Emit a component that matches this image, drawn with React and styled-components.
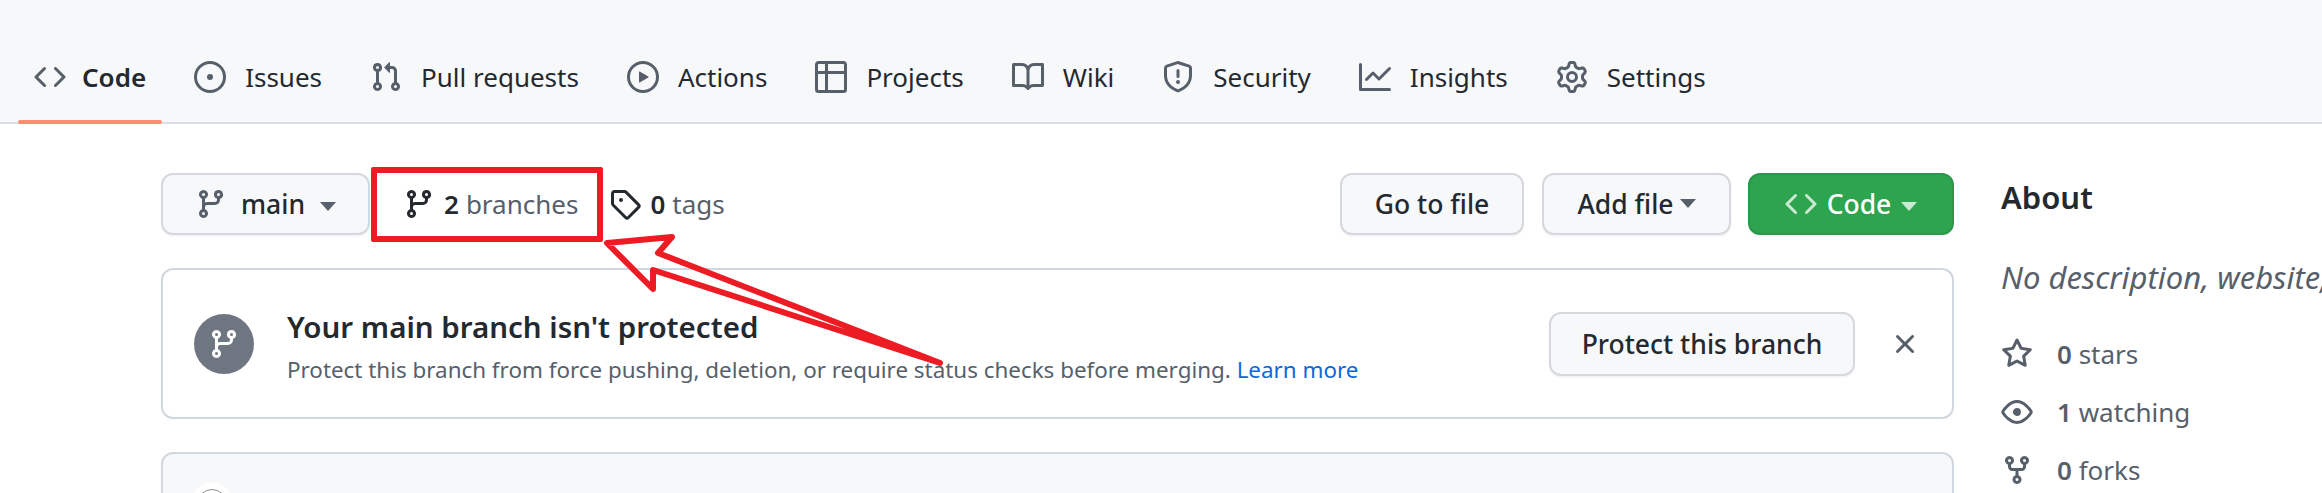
import React from "react";
import { styled, createGlobalStyle } from "styled-components";

const GlobalStyle = createGlobalStyle`
  html, body {
    margin: 0;
    padding: 0;
    background: #fff;
  }
  body {
    font-family: "Noto Sans", "Open Sans", "Liberation Sans", sans-serif;
    color: #24292f;
  }
`;

// octicons, 16px grid
const paths = {
  code: "m11.28 3.22 4.25 4.25a.75.75 0 0 1 0 1.06l-4.25 4.25a.749.749 0 0 1-1.275-.326.749.749 0 0 1 .215-.734L13.94 8l-3.72-3.72a.749.749 0 0 1 .326-1.275.749.749 0 0 1 .734.215Zm-6.56 0a.751.751 0 0 1 1.042.018.751.751 0 0 1 .018 1.042L2.06 8l3.72 3.72a.749.749 0 0 1-.326 1.275.749.749 0 0 1-.734-.215L.47 8.53a.75.75 0 0 1 0-1.06Z",
  issue: "M8 9.5a1.5 1.5 0 1 0 0-3 1.5 1.5 0 0 0 0 3ZM8 0a8 8 0 1 1 0 16A8 8 0 0 1 8 0ZM1.5 8a6.5 6.5 0 1 0 13 0 6.5 6.5 0 0 0-13 0Z",
  pull: "M1.5 3.25a2.25 2.25 0 1 1 3 2.122v5.256a2.251 2.251 0 1 1-1.5 0V5.372A2.25 2.25 0 0 1 1.5 3.25Zm5.677-.177L9.573.677A.25.25 0 0 1 10 .854V2.5h1A2.5 2.5 0 0 1 13.5 5v5.628a2.251 2.251 0 1 1-1.5 0V5a1 1 0 0 0-1-1h-1v1.646a.25.25 0 0 1-.427.177L7.177 3.427a.25.25 0 0 1 0-.354ZM3.75 2.5a.75.75 0 1 0 0 1.5.75.75 0 0 0 0-1.5Zm0 9.5a.75.75 0 1 0 0 1.5.75.75 0 0 0 0-1.5Zm8.25.75a.75.75 0 1 0 1.5 0 .75.75 0 0 0-1.5 0Z",
  play: "M8 0a8 8 0 1 1 0 16A8 8 0 0 1 8 0ZM1.5 8a6.5 6.5 0 1 0 13 0 6.5 6.5 0 0 0-13 0Zm4.879-2.773 4.264 2.559a.25.25 0 0 1 0 .428l-4.264 2.559A.25.25 0 0 1 6 10.559V5.442a.25.25 0 0 1 .379-.215Z",
  table: "M0 1.75C0 .784.784 0 1.75 0h12.5C15.216 0 16 .784 16 1.75v12.5A1.75 1.75 0 0 1 14.25 16H1.75A1.75 1.75 0 0 1 0 14.25ZM6.5 6.5v8h7.75a.25.25 0 0 0 .25-.25V6.5Zm8-1.5V1.75a.25.25 0 0 0-.25-.25H6.5V5Zm-13 1.5v7.75c0 .138.112.25.25.25H5v-8ZM5 5V1.5H1.75a.25.25 0 0 0-.25.25V5Z",
  book: "M0 1.75A.75.75 0 0 1 .75 1h4.253c1.227 0 2.317.59 3 1.501A3.743 3.743 0 0 1 11.006 1h4.245a.75.75 0 0 1 .75.75v10.5a.75.75 0 0 1-.75.75h-4.507a2.25 2.25 0 0 0-1.591.659l-.622.621a.75.75 0 0 1-1.06 0l-.622-.621A2.25 2.25 0 0 0 5.258 13H.75a.75.75 0 0 1-.75-.75Zm7.251 10.324.004-5.073-.002-2.253A2.25 2.25 0 0 0 5.003 2.5H1.5v9h3.757a3.75 3.75 0 0 1 1.994.574ZM8.755 4.75l-.004 7.322a3.752 3.752 0 0 1 1.992-.572H14.5v-9h-3.495a2.25 2.25 0 0 0-2.25 2.25Z",
  shield: "M7.467.133a1.748 1.748 0 0 1 1.066 0l5.25 1.68A1.75 1.75 0 0 1 15 3.48V7c0 1.566-.32 3.182-1.303 4.682-.983 1.498-2.585 2.813-5.032 3.855a1.697 1.697 0 0 1-1.33 0c-2.447-1.042-4.049-2.357-5.032-3.855C1.32 10.182 1 8.566 1 7V3.48a1.75 1.75 0 0 1 1.217-1.667Zm.61 1.429a.25.25 0 0 0-.153 0l-5.25 1.68a.25.25 0 0 0-.174.238V7c0 1.358.275 2.666 1.057 3.86.784 1.194 2.121 2.34 4.366 3.297a.196.196 0 0 0 .154 0c2.245-.956 3.582-2.104 4.366-3.298C13.225 9.666 13.5 8.36 13.5 7V3.48a.251.251 0 0 0-.174-.237l-5.25-1.68ZM8.75 4.75v3a.75.75 0 0 1-1.5 0v-3a.75.75 0 0 1 1.5 0ZM9 10.5a1 1 0 1 1-2 0 1 1 0 0 1 2 0Z",
  graph: "M1.5 1.75V13.5h13.75a.75.75 0 0 1 0 1.5H.75a.75.75 0 0 1-.75-.75V1.75a.75.75 0 0 1 1.5 0Zm14.28 2.53-5.25 5.25a.75.75 0 0 1-1.06 0L7 7.06 4.28 9.78a.751.751 0 0 1-1.042-.018.751.751 0 0 1-.018-1.042l3.25-3.25a.75.75 0 0 1 1.06 0L10 7.94l4.72-4.72a.751.751 0 0 1 1.042.018.751.751 0 0 1 .018 1.042Z",
  gear: "M8 0a8.2 8.2 0 0 1 .701.031C9.444.095 9.99.645 10.16 1.29l.288 1.107c.018.066.079.158.212.224.231.114.454.243.668.386.123.082.233.09.299.071l1.103-.303c.644-.176 1.392.021 1.82.63.27.385.506.792.704 1.218.315.675.111 1.422-.364 1.891l-.814.806c-.049.048-.098.147-.088.294.016.257.016.515 0 .772-.01.147.038.246.088.294l.814.806c.475.469.679 1.216.364 1.891a7.977 7.977 0 0 1-.704 1.217c-.428.61-1.176.807-1.82.63l-1.102-.302c-.067-.019-.177-.011-.3.071a5.909 5.909 0 0 1-.668.386c-.133.066-.194.158-.211.224l-.29 1.106c-.168.646-.715 1.196-1.458 1.26a8.006 8.006 0 0 1-1.402 0c-.743-.064-1.289-.614-1.458-1.26l-.289-1.106c-.018-.066-.079-.158-.212-.224a5.738 5.738 0 0 1-.668-.386c-.123-.082-.233-.09-.299-.071l-1.103.303c-.644.176-1.392-.021-1.82-.63a8.12 8.12 0 0 1-.704-1.218c-.315-.675-.111-1.422.363-1.891l.815-.806c.05-.048.098-.147.088-.294a6.214 6.214 0 0 1 0-.772c.01-.147-.038-.246-.088-.294l-.815-.806C.635 6.045.431 5.298.746 4.623a7.92 7.92 0 0 1 .704-1.217c.428-.61 1.176-.807 1.82-.63l1.102.302c.067.019.177.011.3-.071.214-.143.437-.272.668-.386.133-.066.194-.158.211-.224l.29-1.106C6.009.645 6.556.095 7.299.03 7.53.01 7.764 0 8 0Zm-.571 1.525c-.036.003-.108.036-.137.146l-.289 1.105c-.147.561-.549.967-.998 1.189-.173.086-.34.183-.5.29-.417.278-.97.423-1.529.27l-1.103-.303c-.109-.03-.175.016-.195.045-.22.312-.412.644-.573.99-.014.031-.021.11.059.19l.815.806c.411.406.562.957.53 1.456a4.709 4.709 0 0 0 0 .582c.032.499-.119 1.05-.53 1.456l-.815.806c-.081.08-.073.159-.059.19.162.346.353.677.573.989.02.03.085.076.195.046l1.102-.303c.56-.153 1.113-.008 1.53.27.161.107.328.204.501.29.447.222.85.629.997 1.189l.289 1.105c.029.109.101.143.137.146a6.6 6.6 0 0 0 1.142 0c.036-.003.108-.036.137-.146l.289-1.105c.147-.561.549-.967.998-1.189.173-.086.34-.183.5-.29.417-.278.97-.423 1.529-.27l1.103.303c.109.029.175-.016.195-.045.22-.313.411-.644.573-.99.014-.031.021-.11-.059-.19l-.815-.806c-.411-.406-.562-.957-.53-1.456a4.709 4.709 0 0 0 0-.582c-.032-.499.119-1.05.53-1.456l.815-.806c.081-.08.073-.159.059-.19a6.464 6.464 0 0 0-.573-.989c-.02-.03-.085-.076-.195-.046l-1.102.303c-.56.153-1.113.008-1.53-.27a4.44 4.44 0 0 0-.501-.29c-.447-.222-.85-.629-.997-1.189l-.289-1.105c-.029-.11-.101-.143-.137-.146a6.6 6.6 0 0 0-1.142 0ZM11 8a3 3 0 1 1-6 0 3 3 0 0 1 6 0ZM9.5 8a1.5 1.5 0 1 0-3.001.001A1.5 1.5 0 0 0 9.5 8Z",
  branch: "M9.5 3.25a2.25 2.25 0 1 1 3 2.122V6A2.5 2.5 0 0 1 10 8.5H6a1 1 0 0 0-1 1v1.128a2.251 2.251 0 1 1-1.5 0V5.372a2.25 2.25 0 1 1 1.5 0v1.836A2.493 2.493 0 0 1 6 7h4a1 1 0 0 0 1-1v-.628A2.25 2.25 0 0 1 9.5 3.25Zm-6 0a.75.75 0 1 0 1.5 0 .75.75 0 0 0-1.5 0Zm8.25-.75a.75.75 0 1 0 0 1.5.75.75 0 0 0 0-1.5ZM4.25 12a.75.75 0 1 0 0 1.5.75.75 0 0 0 0-1.5Z",
  tag: "M1 7.775V2.75C1 1.784 1.784 1 2.75 1h5.025c.464 0 .91.184 1.238.513l6.25 6.25a1.75 1.75 0 0 1 0 2.474l-5.026 5.026a1.75 1.75 0 0 1-2.474 0l-6.25-6.25A1.752 1.752 0 0 1 1 7.775Zm1.5 0c0 .066.026.13.073.177l6.25 6.25a.25.25 0 0 0 .354 0l5.025-5.025a.25.25 0 0 0 0-.354l-6.25-6.25a.25.25 0 0 0-.177-.073H2.75a.25.25 0 0 0-.25.25ZM6 5a1 1 0 1 1 0 2 1 1 0 0 1 0-2Z",
  star: "M8 .25a.75.75 0 0 1 .673.418l1.882 3.815 4.21.612a.75.75 0 0 1 .416 1.279l-3.046 2.97.719 4.192a.751.751 0 0 1-1.088.791L8 12.347l-3.766 1.98a.75.75 0 0 1-1.088-.79l.72-4.194L.818 6.374a.75.75 0 0 1 .416-1.28l4.21-.611L7.327.668A.75.75 0 0 1 8 .25Zm0 2.445L6.615 5.5a.75.75 0 0 1-.564.41l-3.097.45 2.24 2.184a.75.75 0 0 1 .216.664l-.528 3.084 2.769-1.456a.75.75 0 0 1 .698 0l2.77 1.456-.53-3.084a.75.75 0 0 1 .216-.664l2.24-2.183-3.096-.45a.75.75 0 0 1-.564-.41L8 2.694Z",
  eye: "M8 2c1.981 0 3.671.992 4.933 2.078 1.27 1.091 2.187 2.345 2.637 3.023a1.62 1.62 0 0 1 0 1.798c-.45.678-1.367 1.932-2.637 3.023C11.67 13.008 9.981 14 8 14c-1.981 0-3.671-.992-4.933-2.078C1.797 10.83.88 9.576.43 8.898a1.62 1.62 0 0 1 0-1.798c.45-.677 1.367-1.931 2.637-3.022C4.33 2.992 6.019 2 8 2ZM1.679 7.932a.12.12 0 0 0 0 .136c.411.622 1.241 1.75 2.366 2.717C5.176 11.758 6.527 12.5 8 12.5c1.473 0 2.825-.742 3.955-1.715 1.124-.967 1.954-2.096 2.366-2.717a.12.12 0 0 0 0-.136c-.412-.621-1.242-1.75-2.366-2.717C10.824 4.242 9.473 3.5 8 3.5c-1.473 0-2.825.742-3.955 1.715-1.124.967-1.954 2.096-2.366 2.717ZM8 10a2 2 0 1 1-.001-3.999A2 2 0 0 1 8 10Z",
  fork: "M5 5.372v.878c0 .414.336.75.75.75h4.5a.75.75 0 0 0 .75-.75v-.878a2.25 2.25 0 1 1 1.5 0v.878a2.25 2.25 0 0 1-2.25 2.25h-1.5v2.128a2.251 2.251 0 1 1-1.5 0V8.5h-1.5A2.25 2.25 0 0 1 3.5 6.25v-.878a2.25 2.25 0 1 1 1.5 0ZM5 3.25a.75.75 0 1 0-1.5 0 .75.75 0 0 0 1.5 0Zm6.75.75a.75.75 0 1 0 0-1.5.75.75 0 0 0 0 1.5Zm-3 8.75a.75.75 0 1 0-1.5 0 .75.75 0 0 0 1.5 0Z",
  x: "M3.72 3.72a.75.75 0 0 1 1.06 0L8 6.94l3.22-3.22a.749.749 0 0 1 1.275.326.749.749 0 0 1-.215.734L9.06 8l3.22 3.22a.749.749 0 0 1-.326 1.275.749.749 0 0 1-.734-.215L8 9.06l-3.22 3.22a.751.751 0 0 1-1.042-.018.751.751 0 0 1-.018-1.042L6.94 8 3.72 4.78a.75.75 0 0 1 0-1.06Z",
};

const IconSvg = styled.svg`
  display: block;
  width: 32px;
  height: 32px;
  flex-shrink: 0;
  fill: currentColor;
`;

const Octicon = ({ name }) => (
  <IconSvg viewBox="0 0 16 16" aria-hidden="true">
    <path d={paths[name]} />
  </IconSvg>
);

const Page = styled.div`
  position: relative;
  width: 2322px;
  height: 493px;
  overflow: hidden;
  background: #fff;
`;

const RepoNav = styled.nav`
  display: flex;
  gap: 16px;
  height: 122px;
  padding-left: 18px;
  align-items: flex-end;
  background: #f6f8fa;
  border-bottom: 2px solid #d8dee4;
`;

const Tab = styled.div`
  position: relative;
  display: flex;
  align-items: center;
  gap: ${(props) => (props.$active ? 16 : 19)}px;
  box-sizing: border-box;
  height: 88px;
  padding: 0 16px 2px;
  font-size: 26px;
  font-weight: ${(props) => (props.$active ? 600 : 400)};
  color: #24292f;
  white-space: nowrap;

  svg {
    color: #57606a;
  }

  &::after {
    content: "";
    display: ${(props) => (props.$active ? "block" : "none")};
    position: absolute;
    left: 0;
    right: 0;
    bottom: -2px;
    height: 4px;
    border-radius: 2px;
    background: #fd8c73;
  }
`;

const Main = styled.main`
  display: flex;
  gap: 47px;
  padding: 49px 0 0 161px;
`;

const Content = styled.div`
  width: 1793px;
  flex-shrink: 0;
`;

const Toolbar = styled.div`
  display: flex;
  align-items: center;
  height: 62px;
`;

const Button = styled.div`
  display: flex;
  align-items: center;
  justify-content: center;
  box-sizing: border-box;
  width: ${(props) => props.$width}px;
  height: ${(props) => props.$height || 62}px;
  margin-left: ${(props) => props.$left || 0}px;
  gap: ${(props) => props.$gap || 0}px;
  flex-shrink: 0;
  font-size: 26.5px;
  font-weight: 500;
  white-space: nowrap;
  color: ${(props) => (props.$primary ? "#fff" : "#24292f")};
  background: ${(props) => (props.$primary ? "#2da44e" : "#f6f8fa")};
  border: 2px solid ${(props) => (props.$primary ? "#2c974b" : "#d5d8dc")};
  border-radius: 12px;
  box-shadow: 0 2px 0 rgba(27, 31, 36, 0.04);

  svg {
    color: ${(props) => (props.$primary ? "rgba(255,255,255,0.75)" : "#57606a")};
  }
`;

const BranchName = styled.span`
  margin-left: 14px;
`;

const Caret = styled.span`
  display: inline-block;
  width: 0;
  height: 0;
  margin-left: ${(props) => props.$left || 0}px;
  margin-top: ${(props) => props.$top || 0}px;
  border-left: 8px solid transparent;
  border-right: 8px solid transparent;
  border-top: 9px solid ${(props) => (props.$light ? "rgba(255,255,255,0.75)" : "#57606a")};
`;

const CountLink = styled.div`
  display: flex;
  align-items: center;
  margin-left: ${(props) => props.$left}px;
  gap: 7px;
  font-size: 26px;
  white-space: nowrap;

  svg {
    color: #24292f;
    margin-right: 2px;
  }

  b {
    font-weight: 600;
  }

  span {
    color: #57606a;
  }
`;

const Spacer = styled.div`
  flex: 1;
`;

const Notice = styled.section`
  display: flex;
  align-items: center;
  box-sizing: border-box;
  height: 151px;
  margin-top: 33px;
  padding: 0 31px;
  border: 2px solid #d0d7de;
  border-radius: 12px;
`;

const NoticeBadge = styled.div`
  display: flex;
  align-items: center;
  justify-content: center;
  width: 60px;
  height: 60px;
  border-radius: 50%;
  background: #6e7781;
  color: #fff;
  flex-shrink: 0;
`;

const NoticeText = styled.div`
  flex: 1;
  margin-left: 33px;
  padding-top: 5px;
`;

const NoticeTitle = styled.div`
  font-size: 29.5px;
  line-height: 38px;
  font-weight: 600;
  color: #24292f;
`;

const NoticeSub = styled.div`
  margin-top: 9px;
  font-size: 22.4px;
  line-height: 30px;
  color: #57606a;

  a {
    color: #0969da;
    text-decoration: none;
  }
`;

const Dismiss = styled.div`
  margin-left: 34px;
  color: #57606a;
`;

const CommitBar = styled.section`
  box-sizing: border-box;
  height: 120px;
  margin-top: 33px;
  padding: 29px 0 0 28px;
  background: #f6f8fa;
  border: 2px solid #d0d7de;
  border-radius: 12px;
`;

const Avatar = styled.div`
  display: flex;
  justify-content: center;
  box-sizing: border-box;
  width: 42px;
  height: 42px;
  padding-top: 6px;
  border-radius: 50%;
  background: #fff;

  &::before {
    content: "";
    width: 28px;
    height: 28px;
    border: 1px solid #8b8f94;
    border-radius: 50%;
  }
`;

const Sidebar = styled.aside`
  flex-shrink: 0;
  padding-top: 4px;
  white-space: nowrap;
`;

const AboutTitle = styled.h2`
  margin: 0;
  font-size: 31px;
  line-height: 40px;
  font-weight: 600;
  color: #24292f;
`;

const Description = styled.p`
  margin: 40px 0 28px;
  font-size: 31px;
  line-height: 40px;
  font-style: italic;
  color: #57606a;
`;

const Stat = styled.div`
  display: flex;
  align-items: center;
  height: 58px;
  gap: 24px;
  font-size: 26px;
  color: #57606a;

  b {
    font-weight: 600;
  }
`;

const Highlight = styled.div`
  position: absolute;
  left: 371px;
  top: 167px;
  box-sizing: border-box;
  width: 232px;
  height: 75px;
  border: 6px solid #ed1c24;
  border-radius: 2px;
`;

const ArrowLayer = styled.svg`
  position: absolute;
  left: 0;
  top: 0;
  pointer-events: none;
`;

const tabs = [
  { label: "Code", icon: "code", active: true },
  { label: "Issues", icon: "issue" },
  { label: "Pull requests", icon: "pull" },
  { label: "Actions", icon: "play" },
  { label: "Projects", icon: "table" },
  { label: "Wiki", icon: "book" },
  { label: "Security", icon: "shield" },
  { label: "Insights", icon: "graph" },
  { label: "Settings", icon: "gear" },
];

const stats = [
  { icon: "star", count: "0", label: "stars" },
  { icon: "eye", count: "1", label: "watching" },
  { icon: "fork", count: "0", label: "forks" },
];

export default function App() {
  return (
    <Page>
      <GlobalStyle />
      <RepoNav>
        {tabs.map((tab) => (
          <Tab key={tab.label} $active={tab.active}>
            <Octicon name={tab.icon} />
            {tab.label}
          </Tab>
        ))}
      </RepoNav>

      <Main>
        <Content>
          <Toolbar>
            <Button $width={209}>
              <Octicon name="branch" />
              <BranchName>main</BranchName>
              <Caret $left={15} $top={4} />
            </Button>
            <CountLink $left={33}>
              <Octicon name="branch" />
              <b>2</b>
              <span>branches</span>
            </CountLink>
            <CountLink $left={31}>
              <Octicon name="tag" />
              <b>0</b>
              <span>tags</span>
            </CountLink>
            <Spacer />
            <Button $width={184}>Go to file</Button>
            <Button $width={189} $left={18} $gap={6}>
              Add file
              <Caret $top={-2} />
            </Button>
            <Button $width={206} $left={17} $primary $gap={10}>
              <Octicon name="code" />
              Code
              <Caret $light $top={4} />
            </Button>
          </Toolbar>

          <Notice>
            <NoticeBadge>
              <Octicon name="branch" />
            </NoticeBadge>
            <NoticeText>
              <NoticeTitle>Your main branch isn't protected</NoticeTitle>
              <NoticeSub>
                Protect this branch from force pushing, deletion, or require status checks before merging.{" "}
                <a href="#learn">Learn more</a>
              </NoticeSub>
            </NoticeText>
            <Button $width={306} $height={64}>
              Protect this branch
            </Button>
            <Dismiss>
              <Octicon name="x" />
            </Dismiss>
          </Notice>

          <CommitBar>
            <Avatar />
          </CommitBar>
        </Content>

        <Sidebar>
          <AboutTitle>About</AboutTitle>
          <Description>No description, website, or topics provided.</Description>
          {stats.map((stat) => (
            <Stat key={stat.label}>
              <Octicon name={stat.icon} />
              <span>
                <b>{stat.count}</b> {stat.label}
              </span>
            </Stat>
          ))}
        </Sidebar>
      </Main>

      <Highlight />
      <ArrowLayer width="2322" height="493" viewBox="0 0 2322 493">
        <path
          d="M607 243 L672 237 L658 253 L940 363 L653 270 L653 289 Z"
          fill="none"
          stroke="#ed1c24"
          strokeWidth="6"
          strokeLinejoin="round"
        />
      </ArrowLayer>
    </Page>
  );
}
